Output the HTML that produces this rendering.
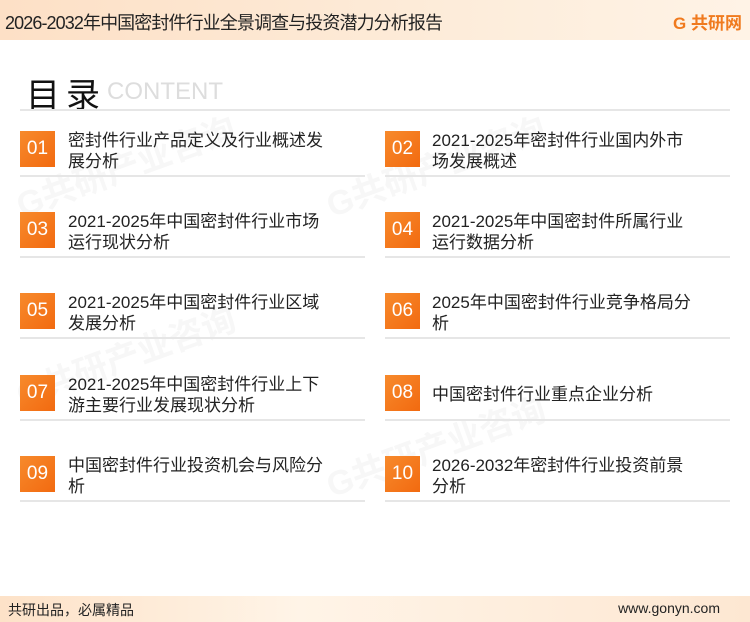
<!DOCTYPE html>
<html><head><meta charset="utf-8"><style>
*{margin:0;padding:0;box-sizing:border-box}
body{width:750px;height:622px;position:relative;background:#fff;font-family:"Liberation Sans","Noto Sans CJK SC",sans-serif;overflow:hidden}
.hd{position:absolute;left:0;top:0;width:750px;height:40px;background:linear-gradient(90deg,#fde0c6,#fdeedd 70%,#fff3e6)}
.hd .t{position:absolute;left:5px;top:9px;font-size:18px;color:#222;letter-spacing:-0.9px}
.logo{position:absolute;right:8px;top:9px;font-size:17px;font-weight:bold;color:#f07a1e}
.ft{position:absolute;left:0;top:596px;width:750px;height:26px;background:linear-gradient(90deg,#fde2c8,#fff4e7 40%,#fde7d2)}
.ft .a{position:absolute;left:8px;top:4px;font-size:14px;color:#222}
.ft .b{position:absolute;right:30px;top:4px;font-size:14px;color:#222}
.mt{position:absolute;left:26px;top:68px;font-size:34px;color:#111;letter-spacing:6px}
.ct{position:absolute;left:107px;top:78px;font-size:24px;color:#ddd}
.ln{position:absolute;height:2px;background:#e6e6e6}
.bx{position:absolute;width:35px;height:36px;background:linear-gradient(135deg,#f78a2c,#f26a10);color:#fff;font-size:19px;text-align:center;line-height:36px}
.tx{position:absolute;font-size:17px;line-height:21px;color:#222;width:262px}
.wm{position:absolute;font-size:34px;font-weight:bold;color:#f7f7f7;transform:rotate(-20deg)}
</style></head><body>
<div class="wm" style="left:10px;top:140px">G共研产业咨询</div>
<div class="wm" style="left:320px;top:140px">G共研产业咨询</div>
<div class="wm" style="left:10px;top:330px">G共研产业咨询</div>
<div class="wm" style="left:320px;top:420px">G共研产业咨询</div>
<div class="hd"><div class="t">2026-2032年中国密封件行业全景调查与投资潜力分析报告</div><div class="logo">G 共研网</div></div>
<div class="mt">目录</div><div class="ct">CONTENT</div>
<div class="ln" style="left:20px;top:109px;width:710px"></div>

<div class="bx" style="left:20px;top:131px">01</div><div class="tx" style="left:68px;top:130px">密封件行业产品定义及行业概述发<br>展分析</div>
<div class="bx" style="left:385px;top:131px">02</div><div class="tx" style="left:432px;top:130px">2021-2025年密封件行业国内外市<br>场发展概述</div>
<div class="ln" style="left:20px;top:175px;width:345px"></div><div class="ln" style="left:385px;top:175px;width:345px"></div>

<div class="bx" style="left:20px;top:212px">03</div><div class="tx" style="left:68px;top:211px">2021-2025年中国密封件行业市场<br>运行现状分析</div>
<div class="bx" style="left:385px;top:212px">04</div><div class="tx" style="left:432px;top:211px">2021-2025年中国密封件所属行业<br>运行数据分析</div>
<div class="ln" style="left:20px;top:256px;width:345px"></div><div class="ln" style="left:385px;top:256px;width:345px"></div>

<div class="bx" style="left:20px;top:293px">05</div><div class="tx" style="left:68px;top:292px">2021-2025年中国密封件行业区域<br>发展分析</div>
<div class="bx" style="left:385px;top:293px">06</div><div class="tx" style="left:432px;top:292px">2025年中国密封件行业竞争格局分<br>析</div>
<div class="ln" style="left:20px;top:337px;width:345px"></div><div class="ln" style="left:385px;top:337px;width:345px"></div>

<div class="bx" style="left:20px;top:375px">07</div><div class="tx" style="left:68px;top:374px">2021-2025年中国密封件行业上下<br>游主要行业发展现状分析</div>
<div class="bx" style="left:385px;top:375px">08</div><div class="tx" style="left:432px;top:384px">中国密封件行业重点企业分析</div>
<div class="ln" style="left:20px;top:419px;width:345px"></div><div class="ln" style="left:385px;top:419px;width:345px"></div>

<div class="bx" style="left:20px;top:456px">09</div><div class="tx" style="left:68px;top:455px">中国密封件行业投资机会与风险分<br>析</div>
<div class="bx" style="left:385px;top:456px">10</div><div class="tx" style="left:432px;top:455px">2026-2032年密封件行业投资前景<br>分析</div>
<div class="ln" style="left:20px;top:500px;width:345px"></div><div class="ln" style="left:385px;top:500px;width:345px"></div>

<div class="ft"><div class="a">共研出品，必属精品</div><div class="b">www.gonyn.com</div></div>
</body></html>
